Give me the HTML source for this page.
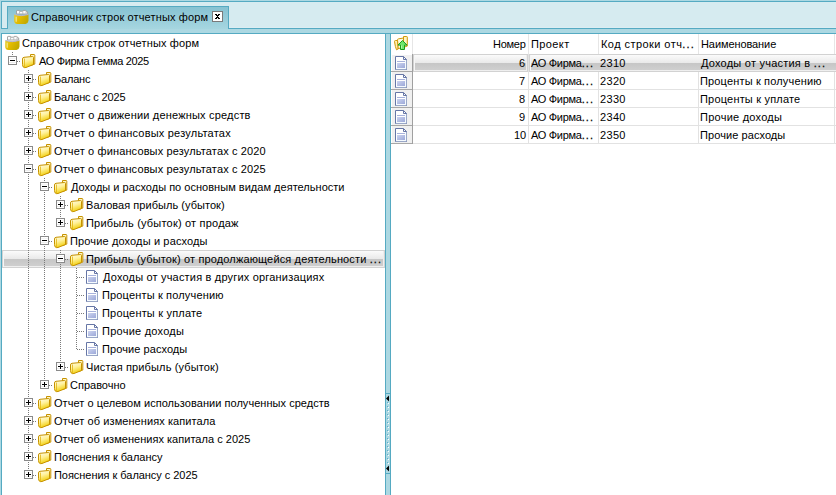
<!DOCTYPE html><html><head><meta charset="utf-8"><style>
html,body{margin:0;padding:0;width:836px;height:495px;overflow:hidden;background:#fff;}
body{position:relative;font-family:"Liberation Sans",sans-serif;font-size:11px;color:#000;}
.a{position:absolute;}
.t{position:absolute;white-space:nowrap;line-height:18px;height:18px;-webkit-text-stroke:0px #000;}
.el{letter-spacing:1.1px;-webkit-text-stroke:0.25px #000;}
svg{display:block;}
</style></head><body>
<div class="a" style="left:0;top:0;width:836px;height:34px;background:#acd8e2"></div>
<div class="a" style="left:1px;top:1px;width:835px;height:26px;background:#d6ebf0;border-top:1px solid #55aac2;border-left:1px solid #55aac2"></div>
<div class="a" style="left:2px;top:27px;width:834px;height:1px;background:#dcedf2"></div>
<div class="a" style="left:1px;top:28px;width:835px;height:1px;background:#55aac2"></div>
<div class="a" style="left:1px;top:33px;width:835px;height:1px;background:#55aac2"></div>
<div class="a" style="left:7px;top:6px;width:220px;height:22px;border:1px solid #55aac2;border-bottom:none;background:linear-gradient(#86c2d2,#a6d6e0)"></div>
<div class="a" style="left:13px;top:9px"><svg width="16" height="16" viewBox="0 0 16 16"><defs><linearGradient id="rgt" x1="0" y1="0" x2="1" y2="0.4"><stop offset="0" stop-color="#e6d03a"/><stop offset="0.45" stop-color="#e4bc00"/><stop offset="1" stop-color="#c4aa00"/></linearGradient></defs><path d="M3.5 5 v-3 q0-0.6 0.6-0.6 h2.4 l0.5 0.8 h2.6 l0.5-0.8 h2.4 l1.2 0.8 v0.8 h1 v2z" fill="#fbfbfb" stroke="#9c9c9c" stroke-width="0.9"/><path d="M6.5 1.8 v3 M9.8 2 v3 M13 2.2 v2.5" stroke="#b4b4b4" stroke-width="0.8"/><path d="M1.2 5.2 q6.5 2.6 14.3 0 v6.6 q-0.3 2.6-3 3.2 h-8.5 q-2.6-0.4-2.8-2.8z" fill="url(#rgt)"/><path d="M1.5 5.5 q6.5 2.4 13.8 0" stroke="#b4b4d8" stroke-width="1" fill="none"/><path d="M3.2 7.8 v5" stroke="#f4e68a" stroke-width="1.2"/></svg></div>
<div class="t" style="left:31.00px;top:8px;letter-spacing:0.138px">Справочник строк отчетных форм</div>
<div class="a" style="left:212px;top:11px;width:9px;height:9px;border:1px solid #7a7a7a;background:#fff"><svg width="9" height="9" shape-rendering="crispEdges" fill="#000"><rect x="2" y="2" width="1" height="1"/><rect x="3" y="2" width="1" height="1"/><rect x="5" y="2" width="1" height="1"/><rect x="6" y="2" width="1" height="1"/><rect x="3" y="3" width="1" height="1"/><rect x="4" y="3" width="1" height="1"/><rect x="5" y="3" width="1" height="1"/><rect x="4" y="4" width="1" height="1"/><rect x="3" y="5" width="1" height="1"/><rect x="4" y="5" width="1" height="1"/><rect x="5" y="5" width="1" height="1"/><rect x="2" y="6" width="1" height="1"/><rect x="3" y="6" width="1" height="1"/><rect x="5" y="6" width="1" height="1"/><rect x="6" y="6" width="1" height="1"/></svg></div>
<div class="a" style="left:1px;top:33px;width:1px;height:462px;background:#55aac2"></div>
<div class="a" style="left:0px;top:34px;width:1px;height:461px;background:#acd8e2"></div>
<div class="a" style="left:385px;top:34px;width:4px;height:461px;background:#acd8e2;border-left:1px solid #55aac2;border-right:1px solid #55aac2"></div>
<div class="a" style="left:386px;top:393px;width:4px;height:1px;background:#55aac2"></div>
<div class="a" style="left:386px;top:473px;width:4px;height:1px;background:#55aac2"></div>
<svg class="a" style="left:386px;top:395px" width="4" height="78"><path d="M0 3.5 L3 0.5 V6.5z" fill="#000"/><rect x="2" y="8" width="1" height="1" fill="#fff"/><rect x="1" y="7" width="1" height="1" fill="#5aaecb"/><rect x="2" y="12" width="1" height="1" fill="#fff"/><rect x="1" y="11" width="1" height="1" fill="#5aaecb"/><rect x="2" y="16" width="1" height="1" fill="#fff"/><rect x="1" y="15" width="1" height="1" fill="#5aaecb"/><rect x="2" y="20" width="1" height="1" fill="#fff"/><rect x="1" y="19" width="1" height="1" fill="#5aaecb"/><rect x="2" y="24" width="1" height="1" fill="#fff"/><rect x="1" y="23" width="1" height="1" fill="#5aaecb"/><rect x="2" y="28" width="1" height="1" fill="#fff"/><rect x="1" y="27" width="1" height="1" fill="#5aaecb"/><rect x="2" y="32" width="1" height="1" fill="#fff"/><rect x="1" y="31" width="1" height="1" fill="#5aaecb"/><rect x="2" y="36" width="1" height="1" fill="#fff"/><rect x="1" y="35" width="1" height="1" fill="#5aaecb"/><rect x="2" y="40" width="1" height="1" fill="#fff"/><rect x="1" y="39" width="1" height="1" fill="#5aaecb"/><rect x="2" y="44" width="1" height="1" fill="#fff"/><rect x="1" y="43" width="1" height="1" fill="#5aaecb"/><rect x="2" y="48" width="1" height="1" fill="#fff"/><rect x="1" y="47" width="1" height="1" fill="#5aaecb"/><rect x="2" y="52" width="1" height="1" fill="#fff"/><rect x="1" y="51" width="1" height="1" fill="#5aaecb"/><rect x="2" y="56" width="1" height="1" fill="#fff"/><rect x="1" y="55" width="1" height="1" fill="#5aaecb"/><rect x="2" y="60" width="1" height="1" fill="#fff"/><rect x="1" y="59" width="1" height="1" fill="#5aaecb"/><rect x="2" y="64" width="1" height="1" fill="#fff"/><rect x="1" y="63" width="1" height="1" fill="#5aaecb"/><rect x="2" y="68" width="1" height="1" fill="#fff"/><rect x="1" y="67" width="1" height="1" fill="#5aaecb"/><path d="M0 73.5 L3 70.5 V76.5z" fill="#000"/></svg>
<div class="a" style="left:2px;top:250px;width:381px;height:16px;border:1px solid #d2d2d2;background:linear-gradient(#fbfbfb 0px,#e9e9e9 8px,#c6c6c6 8px,#cfcfcf 15px,#efefef 15px);box-shadow:inset 1px 0 #f6f6f6,inset -1px 0 #eeeeee"></div>
<svg class="a" style="left:0;top:0" width="385" height="495"><rect x="12" y="52" width="1" height="1" fill="#7a7a7a"/><rect x="12" y="54" width="1" height="1" fill="#7a7a7a"/><rect x="12" y="56" width="1" height="1" fill="#7a7a7a"/><rect x="12" y="58" width="1" height="1" fill="#7a7a7a"/><rect x="12" y="60" width="1" height="1" fill="#7a7a7a"/><rect x="17" y="61" width="1" height="1" fill="#7a7a7a"/><rect x="19" y="61" width="1" height="1" fill="#7a7a7a"/><rect x="28" y="70" width="1" height="1" fill="#7a7a7a"/><rect x="28" y="72" width="1" height="1" fill="#7a7a7a"/><rect x="28" y="74" width="1" height="1" fill="#7a7a7a"/><rect x="28" y="76" width="1" height="1" fill="#7a7a7a"/><rect x="28" y="78" width="1" height="1" fill="#7a7a7a"/><rect x="28" y="80" width="1" height="1" fill="#7a7a7a"/><rect x="28" y="82" width="1" height="1" fill="#7a7a7a"/><rect x="28" y="84" width="1" height="1" fill="#7a7a7a"/><rect x="28" y="86" width="1" height="1" fill="#7a7a7a"/><rect x="33" y="79" width="1" height="1" fill="#7a7a7a"/><rect x="35" y="79" width="1" height="1" fill="#7a7a7a"/><rect x="28" y="88" width="1" height="1" fill="#7a7a7a"/><rect x="28" y="90" width="1" height="1" fill="#7a7a7a"/><rect x="28" y="92" width="1" height="1" fill="#7a7a7a"/><rect x="28" y="94" width="1" height="1" fill="#7a7a7a"/><rect x="28" y="96" width="1" height="1" fill="#7a7a7a"/><rect x="28" y="98" width="1" height="1" fill="#7a7a7a"/><rect x="28" y="100" width="1" height="1" fill="#7a7a7a"/><rect x="28" y="102" width="1" height="1" fill="#7a7a7a"/><rect x="28" y="104" width="1" height="1" fill="#7a7a7a"/><rect x="33" y="97" width="1" height="1" fill="#7a7a7a"/><rect x="35" y="97" width="1" height="1" fill="#7a7a7a"/><rect x="28" y="106" width="1" height="1" fill="#7a7a7a"/><rect x="28" y="108" width="1" height="1" fill="#7a7a7a"/><rect x="28" y="110" width="1" height="1" fill="#7a7a7a"/><rect x="28" y="112" width="1" height="1" fill="#7a7a7a"/><rect x="28" y="114" width="1" height="1" fill="#7a7a7a"/><rect x="28" y="116" width="1" height="1" fill="#7a7a7a"/><rect x="28" y="118" width="1" height="1" fill="#7a7a7a"/><rect x="28" y="120" width="1" height="1" fill="#7a7a7a"/><rect x="28" y="122" width="1" height="1" fill="#7a7a7a"/><rect x="33" y="115" width="1" height="1" fill="#7a7a7a"/><rect x="35" y="115" width="1" height="1" fill="#7a7a7a"/><rect x="28" y="124" width="1" height="1" fill="#7a7a7a"/><rect x="28" y="126" width="1" height="1" fill="#7a7a7a"/><rect x="28" y="128" width="1" height="1" fill="#7a7a7a"/><rect x="28" y="130" width="1" height="1" fill="#7a7a7a"/><rect x="28" y="132" width="1" height="1" fill="#7a7a7a"/><rect x="28" y="134" width="1" height="1" fill="#7a7a7a"/><rect x="28" y="136" width="1" height="1" fill="#7a7a7a"/><rect x="28" y="138" width="1" height="1" fill="#7a7a7a"/><rect x="28" y="140" width="1" height="1" fill="#7a7a7a"/><rect x="33" y="133" width="1" height="1" fill="#7a7a7a"/><rect x="35" y="133" width="1" height="1" fill="#7a7a7a"/><rect x="28" y="142" width="1" height="1" fill="#7a7a7a"/><rect x="28" y="144" width="1" height="1" fill="#7a7a7a"/><rect x="28" y="146" width="1" height="1" fill="#7a7a7a"/><rect x="28" y="148" width="1" height="1" fill="#7a7a7a"/><rect x="28" y="150" width="1" height="1" fill="#7a7a7a"/><rect x="28" y="152" width="1" height="1" fill="#7a7a7a"/><rect x="28" y="154" width="1" height="1" fill="#7a7a7a"/><rect x="28" y="156" width="1" height="1" fill="#7a7a7a"/><rect x="28" y="158" width="1" height="1" fill="#7a7a7a"/><rect x="33" y="151" width="1" height="1" fill="#7a7a7a"/><rect x="35" y="151" width="1" height="1" fill="#7a7a7a"/><rect x="28" y="160" width="1" height="1" fill="#7a7a7a"/><rect x="28" y="162" width="1" height="1" fill="#7a7a7a"/><rect x="28" y="164" width="1" height="1" fill="#7a7a7a"/><rect x="28" y="166" width="1" height="1" fill="#7a7a7a"/><rect x="28" y="168" width="1" height="1" fill="#7a7a7a"/><rect x="28" y="170" width="1" height="1" fill="#7a7a7a"/><rect x="28" y="172" width="1" height="1" fill="#7a7a7a"/><rect x="28" y="174" width="1" height="1" fill="#7a7a7a"/><rect x="28" y="176" width="1" height="1" fill="#7a7a7a"/><rect x="28" y="178" width="1" height="1" fill="#7a7a7a"/><rect x="28" y="180" width="1" height="1" fill="#7a7a7a"/><rect x="28" y="182" width="1" height="1" fill="#7a7a7a"/><rect x="28" y="184" width="1" height="1" fill="#7a7a7a"/><rect x="28" y="186" width="1" height="1" fill="#7a7a7a"/><rect x="28" y="188" width="1" height="1" fill="#7a7a7a"/><rect x="28" y="190" width="1" height="1" fill="#7a7a7a"/><rect x="28" y="192" width="1" height="1" fill="#7a7a7a"/><rect x="28" y="194" width="1" height="1" fill="#7a7a7a"/><rect x="28" y="196" width="1" height="1" fill="#7a7a7a"/><rect x="28" y="198" width="1" height="1" fill="#7a7a7a"/><rect x="28" y="200" width="1" height="1" fill="#7a7a7a"/><rect x="28" y="202" width="1" height="1" fill="#7a7a7a"/><rect x="28" y="204" width="1" height="1" fill="#7a7a7a"/><rect x="28" y="206" width="1" height="1" fill="#7a7a7a"/><rect x="28" y="208" width="1" height="1" fill="#7a7a7a"/><rect x="28" y="210" width="1" height="1" fill="#7a7a7a"/><rect x="28" y="212" width="1" height="1" fill="#7a7a7a"/><rect x="28" y="214" width="1" height="1" fill="#7a7a7a"/><rect x="28" y="216" width="1" height="1" fill="#7a7a7a"/><rect x="28" y="218" width="1" height="1" fill="#7a7a7a"/><rect x="28" y="220" width="1" height="1" fill="#7a7a7a"/><rect x="28" y="222" width="1" height="1" fill="#7a7a7a"/><rect x="28" y="224" width="1" height="1" fill="#7a7a7a"/><rect x="28" y="226" width="1" height="1" fill="#7a7a7a"/><rect x="28" y="228" width="1" height="1" fill="#7a7a7a"/><rect x="28" y="230" width="1" height="1" fill="#7a7a7a"/><rect x="28" y="232" width="1" height="1" fill="#7a7a7a"/><rect x="28" y="234" width="1" height="1" fill="#7a7a7a"/><rect x="28" y="236" width="1" height="1" fill="#7a7a7a"/><rect x="28" y="238" width="1" height="1" fill="#7a7a7a"/><rect x="28" y="240" width="1" height="1" fill="#7a7a7a"/><rect x="28" y="242" width="1" height="1" fill="#7a7a7a"/><rect x="28" y="244" width="1" height="1" fill="#7a7a7a"/><rect x="28" y="246" width="1" height="1" fill="#7a7a7a"/><rect x="28" y="248" width="1" height="1" fill="#7a7a7a"/><rect x="28" y="250" width="1" height="1" fill="#7a7a7a"/><rect x="28" y="252" width="1" height="1" fill="#7a7a7a"/><rect x="28" y="254" width="1" height="1" fill="#7a7a7a"/><rect x="28" y="256" width="1" height="1" fill="#7a7a7a"/><rect x="28" y="258" width="1" height="1" fill="#7a7a7a"/><rect x="28" y="260" width="1" height="1" fill="#7a7a7a"/><rect x="28" y="262" width="1" height="1" fill="#7a7a7a"/><rect x="28" y="264" width="1" height="1" fill="#7a7a7a"/><rect x="28" y="266" width="1" height="1" fill="#7a7a7a"/><rect x="28" y="268" width="1" height="1" fill="#7a7a7a"/><rect x="28" y="270" width="1" height="1" fill="#7a7a7a"/><rect x="28" y="272" width="1" height="1" fill="#7a7a7a"/><rect x="28" y="274" width="1" height="1" fill="#7a7a7a"/><rect x="28" y="276" width="1" height="1" fill="#7a7a7a"/><rect x="28" y="278" width="1" height="1" fill="#7a7a7a"/><rect x="28" y="280" width="1" height="1" fill="#7a7a7a"/><rect x="28" y="282" width="1" height="1" fill="#7a7a7a"/><rect x="28" y="284" width="1" height="1" fill="#7a7a7a"/><rect x="28" y="286" width="1" height="1" fill="#7a7a7a"/><rect x="28" y="288" width="1" height="1" fill="#7a7a7a"/><rect x="28" y="290" width="1" height="1" fill="#7a7a7a"/><rect x="28" y="292" width="1" height="1" fill="#7a7a7a"/><rect x="28" y="294" width="1" height="1" fill="#7a7a7a"/><rect x="28" y="296" width="1" height="1" fill="#7a7a7a"/><rect x="28" y="298" width="1" height="1" fill="#7a7a7a"/><rect x="28" y="300" width="1" height="1" fill="#7a7a7a"/><rect x="28" y="302" width="1" height="1" fill="#7a7a7a"/><rect x="28" y="304" width="1" height="1" fill="#7a7a7a"/><rect x="28" y="306" width="1" height="1" fill="#7a7a7a"/><rect x="28" y="308" width="1" height="1" fill="#7a7a7a"/><rect x="28" y="310" width="1" height="1" fill="#7a7a7a"/><rect x="28" y="312" width="1" height="1" fill="#7a7a7a"/><rect x="28" y="314" width="1" height="1" fill="#7a7a7a"/><rect x="28" y="316" width="1" height="1" fill="#7a7a7a"/><rect x="28" y="318" width="1" height="1" fill="#7a7a7a"/><rect x="28" y="320" width="1" height="1" fill="#7a7a7a"/><rect x="28" y="322" width="1" height="1" fill="#7a7a7a"/><rect x="28" y="324" width="1" height="1" fill="#7a7a7a"/><rect x="28" y="326" width="1" height="1" fill="#7a7a7a"/><rect x="28" y="328" width="1" height="1" fill="#7a7a7a"/><rect x="28" y="330" width="1" height="1" fill="#7a7a7a"/><rect x="28" y="332" width="1" height="1" fill="#7a7a7a"/><rect x="28" y="334" width="1" height="1" fill="#7a7a7a"/><rect x="28" y="336" width="1" height="1" fill="#7a7a7a"/><rect x="28" y="338" width="1" height="1" fill="#7a7a7a"/><rect x="28" y="340" width="1" height="1" fill="#7a7a7a"/><rect x="28" y="342" width="1" height="1" fill="#7a7a7a"/><rect x="28" y="344" width="1" height="1" fill="#7a7a7a"/><rect x="28" y="346" width="1" height="1" fill="#7a7a7a"/><rect x="28" y="348" width="1" height="1" fill="#7a7a7a"/><rect x="28" y="350" width="1" height="1" fill="#7a7a7a"/><rect x="28" y="352" width="1" height="1" fill="#7a7a7a"/><rect x="28" y="354" width="1" height="1" fill="#7a7a7a"/><rect x="28" y="356" width="1" height="1" fill="#7a7a7a"/><rect x="28" y="358" width="1" height="1" fill="#7a7a7a"/><rect x="28" y="360" width="1" height="1" fill="#7a7a7a"/><rect x="28" y="362" width="1" height="1" fill="#7a7a7a"/><rect x="28" y="364" width="1" height="1" fill="#7a7a7a"/><rect x="28" y="366" width="1" height="1" fill="#7a7a7a"/><rect x="28" y="368" width="1" height="1" fill="#7a7a7a"/><rect x="28" y="370" width="1" height="1" fill="#7a7a7a"/><rect x="28" y="372" width="1" height="1" fill="#7a7a7a"/><rect x="28" y="374" width="1" height="1" fill="#7a7a7a"/><rect x="28" y="376" width="1" height="1" fill="#7a7a7a"/><rect x="28" y="378" width="1" height="1" fill="#7a7a7a"/><rect x="28" y="380" width="1" height="1" fill="#7a7a7a"/><rect x="28" y="382" width="1" height="1" fill="#7a7a7a"/><rect x="28" y="384" width="1" height="1" fill="#7a7a7a"/><rect x="28" y="386" width="1" height="1" fill="#7a7a7a"/><rect x="28" y="388" width="1" height="1" fill="#7a7a7a"/><rect x="28" y="390" width="1" height="1" fill="#7a7a7a"/><rect x="28" y="392" width="1" height="1" fill="#7a7a7a"/><rect x="33" y="169" width="1" height="1" fill="#7a7a7a"/><rect x="35" y="169" width="1" height="1" fill="#7a7a7a"/><rect x="44" y="178" width="1" height="1" fill="#7a7a7a"/><rect x="44" y="180" width="1" height="1" fill="#7a7a7a"/><rect x="44" y="182" width="1" height="1" fill="#7a7a7a"/><rect x="44" y="184" width="1" height="1" fill="#7a7a7a"/><rect x="44" y="186" width="1" height="1" fill="#7a7a7a"/><rect x="44" y="188" width="1" height="1" fill="#7a7a7a"/><rect x="44" y="190" width="1" height="1" fill="#7a7a7a"/><rect x="44" y="192" width="1" height="1" fill="#7a7a7a"/><rect x="44" y="194" width="1" height="1" fill="#7a7a7a"/><rect x="44" y="196" width="1" height="1" fill="#7a7a7a"/><rect x="44" y="198" width="1" height="1" fill="#7a7a7a"/><rect x="44" y="200" width="1" height="1" fill="#7a7a7a"/><rect x="44" y="202" width="1" height="1" fill="#7a7a7a"/><rect x="44" y="204" width="1" height="1" fill="#7a7a7a"/><rect x="44" y="206" width="1" height="1" fill="#7a7a7a"/><rect x="44" y="208" width="1" height="1" fill="#7a7a7a"/><rect x="44" y="210" width="1" height="1" fill="#7a7a7a"/><rect x="44" y="212" width="1" height="1" fill="#7a7a7a"/><rect x="44" y="214" width="1" height="1" fill="#7a7a7a"/><rect x="44" y="216" width="1" height="1" fill="#7a7a7a"/><rect x="44" y="218" width="1" height="1" fill="#7a7a7a"/><rect x="44" y="220" width="1" height="1" fill="#7a7a7a"/><rect x="44" y="222" width="1" height="1" fill="#7a7a7a"/><rect x="44" y="224" width="1" height="1" fill="#7a7a7a"/><rect x="44" y="226" width="1" height="1" fill="#7a7a7a"/><rect x="44" y="228" width="1" height="1" fill="#7a7a7a"/><rect x="44" y="230" width="1" height="1" fill="#7a7a7a"/><rect x="49" y="187" width="1" height="1" fill="#7a7a7a"/><rect x="51" y="187" width="1" height="1" fill="#7a7a7a"/><rect x="60" y="196" width="1" height="1" fill="#7a7a7a"/><rect x="60" y="198" width="1" height="1" fill="#7a7a7a"/><rect x="60" y="200" width="1" height="1" fill="#7a7a7a"/><rect x="60" y="202" width="1" height="1" fill="#7a7a7a"/><rect x="60" y="204" width="1" height="1" fill="#7a7a7a"/><rect x="60" y="206" width="1" height="1" fill="#7a7a7a"/><rect x="60" y="208" width="1" height="1" fill="#7a7a7a"/><rect x="60" y="210" width="1" height="1" fill="#7a7a7a"/><rect x="60" y="212" width="1" height="1" fill="#7a7a7a"/><rect x="65" y="205" width="1" height="1" fill="#7a7a7a"/><rect x="67" y="205" width="1" height="1" fill="#7a7a7a"/><rect x="60" y="214" width="1" height="1" fill="#7a7a7a"/><rect x="60" y="216" width="1" height="1" fill="#7a7a7a"/><rect x="60" y="218" width="1" height="1" fill="#7a7a7a"/><rect x="60" y="220" width="1" height="1" fill="#7a7a7a"/><rect x="60" y="222" width="1" height="1" fill="#7a7a7a"/><rect x="65" y="223" width="1" height="1" fill="#7a7a7a"/><rect x="67" y="223" width="1" height="1" fill="#7a7a7a"/><rect x="44" y="232" width="1" height="1" fill="#7a7a7a"/><rect x="44" y="234" width="1" height="1" fill="#7a7a7a"/><rect x="44" y="236" width="1" height="1" fill="#7a7a7a"/><rect x="44" y="238" width="1" height="1" fill="#7a7a7a"/><rect x="44" y="240" width="1" height="1" fill="#7a7a7a"/><rect x="44" y="242" width="1" height="1" fill="#7a7a7a"/><rect x="44" y="244" width="1" height="1" fill="#7a7a7a"/><rect x="44" y="246" width="1" height="1" fill="#7a7a7a"/><rect x="44" y="248" width="1" height="1" fill="#7a7a7a"/><rect x="44" y="250" width="1" height="1" fill="#7a7a7a"/><rect x="44" y="252" width="1" height="1" fill="#7a7a7a"/><rect x="44" y="254" width="1" height="1" fill="#7a7a7a"/><rect x="44" y="256" width="1" height="1" fill="#7a7a7a"/><rect x="44" y="258" width="1" height="1" fill="#7a7a7a"/><rect x="44" y="260" width="1" height="1" fill="#7a7a7a"/><rect x="44" y="262" width="1" height="1" fill="#7a7a7a"/><rect x="44" y="264" width="1" height="1" fill="#7a7a7a"/><rect x="44" y="266" width="1" height="1" fill="#7a7a7a"/><rect x="44" y="268" width="1" height="1" fill="#7a7a7a"/><rect x="44" y="270" width="1" height="1" fill="#7a7a7a"/><rect x="44" y="272" width="1" height="1" fill="#7a7a7a"/><rect x="44" y="274" width="1" height="1" fill="#7a7a7a"/><rect x="44" y="276" width="1" height="1" fill="#7a7a7a"/><rect x="44" y="278" width="1" height="1" fill="#7a7a7a"/><rect x="44" y="280" width="1" height="1" fill="#7a7a7a"/><rect x="44" y="282" width="1" height="1" fill="#7a7a7a"/><rect x="44" y="284" width="1" height="1" fill="#7a7a7a"/><rect x="44" y="286" width="1" height="1" fill="#7a7a7a"/><rect x="44" y="288" width="1" height="1" fill="#7a7a7a"/><rect x="44" y="290" width="1" height="1" fill="#7a7a7a"/><rect x="44" y="292" width="1" height="1" fill="#7a7a7a"/><rect x="44" y="294" width="1" height="1" fill="#7a7a7a"/><rect x="44" y="296" width="1" height="1" fill="#7a7a7a"/><rect x="44" y="298" width="1" height="1" fill="#7a7a7a"/><rect x="44" y="300" width="1" height="1" fill="#7a7a7a"/><rect x="44" y="302" width="1" height="1" fill="#7a7a7a"/><rect x="44" y="304" width="1" height="1" fill="#7a7a7a"/><rect x="44" y="306" width="1" height="1" fill="#7a7a7a"/><rect x="44" y="308" width="1" height="1" fill="#7a7a7a"/><rect x="44" y="310" width="1" height="1" fill="#7a7a7a"/><rect x="44" y="312" width="1" height="1" fill="#7a7a7a"/><rect x="44" y="314" width="1" height="1" fill="#7a7a7a"/><rect x="44" y="316" width="1" height="1" fill="#7a7a7a"/><rect x="44" y="318" width="1" height="1" fill="#7a7a7a"/><rect x="44" y="320" width="1" height="1" fill="#7a7a7a"/><rect x="44" y="322" width="1" height="1" fill="#7a7a7a"/><rect x="44" y="324" width="1" height="1" fill="#7a7a7a"/><rect x="44" y="326" width="1" height="1" fill="#7a7a7a"/><rect x="44" y="328" width="1" height="1" fill="#7a7a7a"/><rect x="44" y="330" width="1" height="1" fill="#7a7a7a"/><rect x="44" y="332" width="1" height="1" fill="#7a7a7a"/><rect x="44" y="334" width="1" height="1" fill="#7a7a7a"/><rect x="44" y="336" width="1" height="1" fill="#7a7a7a"/><rect x="44" y="338" width="1" height="1" fill="#7a7a7a"/><rect x="44" y="340" width="1" height="1" fill="#7a7a7a"/><rect x="44" y="342" width="1" height="1" fill="#7a7a7a"/><rect x="44" y="344" width="1" height="1" fill="#7a7a7a"/><rect x="44" y="346" width="1" height="1" fill="#7a7a7a"/><rect x="44" y="348" width="1" height="1" fill="#7a7a7a"/><rect x="44" y="350" width="1" height="1" fill="#7a7a7a"/><rect x="44" y="352" width="1" height="1" fill="#7a7a7a"/><rect x="44" y="354" width="1" height="1" fill="#7a7a7a"/><rect x="44" y="356" width="1" height="1" fill="#7a7a7a"/><rect x="44" y="358" width="1" height="1" fill="#7a7a7a"/><rect x="44" y="360" width="1" height="1" fill="#7a7a7a"/><rect x="44" y="362" width="1" height="1" fill="#7a7a7a"/><rect x="44" y="364" width="1" height="1" fill="#7a7a7a"/><rect x="44" y="366" width="1" height="1" fill="#7a7a7a"/><rect x="44" y="368" width="1" height="1" fill="#7a7a7a"/><rect x="44" y="370" width="1" height="1" fill="#7a7a7a"/><rect x="44" y="372" width="1" height="1" fill="#7a7a7a"/><rect x="44" y="374" width="1" height="1" fill="#7a7a7a"/><rect x="49" y="241" width="1" height="1" fill="#7a7a7a"/><rect x="51" y="241" width="1" height="1" fill="#7a7a7a"/><rect x="60" y="250" width="1" height="1" fill="#7a7a7a"/><rect x="60" y="252" width="1" height="1" fill="#7a7a7a"/><rect x="60" y="254" width="1" height="1" fill="#7a7a7a"/><rect x="60" y="256" width="1" height="1" fill="#7a7a7a"/><rect x="60" y="258" width="1" height="1" fill="#7a7a7a"/><rect x="60" y="260" width="1" height="1" fill="#7a7a7a"/><rect x="60" y="262" width="1" height="1" fill="#7a7a7a"/><rect x="60" y="264" width="1" height="1" fill="#7a7a7a"/><rect x="60" y="266" width="1" height="1" fill="#7a7a7a"/><rect x="60" y="268" width="1" height="1" fill="#7a7a7a"/><rect x="60" y="270" width="1" height="1" fill="#7a7a7a"/><rect x="60" y="272" width="1" height="1" fill="#7a7a7a"/><rect x="60" y="274" width="1" height="1" fill="#7a7a7a"/><rect x="60" y="276" width="1" height="1" fill="#7a7a7a"/><rect x="60" y="278" width="1" height="1" fill="#7a7a7a"/><rect x="60" y="280" width="1" height="1" fill="#7a7a7a"/><rect x="60" y="282" width="1" height="1" fill="#7a7a7a"/><rect x="60" y="284" width="1" height="1" fill="#7a7a7a"/><rect x="60" y="286" width="1" height="1" fill="#7a7a7a"/><rect x="60" y="288" width="1" height="1" fill="#7a7a7a"/><rect x="60" y="290" width="1" height="1" fill="#7a7a7a"/><rect x="60" y="292" width="1" height="1" fill="#7a7a7a"/><rect x="60" y="294" width="1" height="1" fill="#7a7a7a"/><rect x="60" y="296" width="1" height="1" fill="#7a7a7a"/><rect x="60" y="298" width="1" height="1" fill="#7a7a7a"/><rect x="60" y="300" width="1" height="1" fill="#7a7a7a"/><rect x="60" y="302" width="1" height="1" fill="#7a7a7a"/><rect x="60" y="304" width="1" height="1" fill="#7a7a7a"/><rect x="60" y="306" width="1" height="1" fill="#7a7a7a"/><rect x="60" y="308" width="1" height="1" fill="#7a7a7a"/><rect x="60" y="310" width="1" height="1" fill="#7a7a7a"/><rect x="60" y="312" width="1" height="1" fill="#7a7a7a"/><rect x="60" y="314" width="1" height="1" fill="#7a7a7a"/><rect x="60" y="316" width="1" height="1" fill="#7a7a7a"/><rect x="60" y="318" width="1" height="1" fill="#7a7a7a"/><rect x="60" y="320" width="1" height="1" fill="#7a7a7a"/><rect x="60" y="322" width="1" height="1" fill="#7a7a7a"/><rect x="60" y="324" width="1" height="1" fill="#7a7a7a"/><rect x="60" y="326" width="1" height="1" fill="#7a7a7a"/><rect x="60" y="328" width="1" height="1" fill="#7a7a7a"/><rect x="60" y="330" width="1" height="1" fill="#7a7a7a"/><rect x="60" y="332" width="1" height="1" fill="#7a7a7a"/><rect x="60" y="334" width="1" height="1" fill="#7a7a7a"/><rect x="60" y="336" width="1" height="1" fill="#7a7a7a"/><rect x="60" y="338" width="1" height="1" fill="#7a7a7a"/><rect x="60" y="340" width="1" height="1" fill="#7a7a7a"/><rect x="60" y="342" width="1" height="1" fill="#7a7a7a"/><rect x="60" y="344" width="1" height="1" fill="#7a7a7a"/><rect x="60" y="346" width="1" height="1" fill="#7a7a7a"/><rect x="60" y="348" width="1" height="1" fill="#7a7a7a"/><rect x="60" y="350" width="1" height="1" fill="#7a7a7a"/><rect x="60" y="352" width="1" height="1" fill="#7a7a7a"/><rect x="60" y="354" width="1" height="1" fill="#7a7a7a"/><rect x="60" y="356" width="1" height="1" fill="#7a7a7a"/><rect x="65" y="259" width="1" height="1" fill="#7a7a7a"/><rect x="67" y="259" width="1" height="1" fill="#7a7a7a"/><rect x="76" y="268" width="1" height="1" fill="#7a7a7a"/><rect x="76" y="270" width="1" height="1" fill="#7a7a7a"/><rect x="76" y="272" width="1" height="1" fill="#7a7a7a"/><rect x="76" y="274" width="1" height="1" fill="#7a7a7a"/><rect x="76" y="276" width="1" height="1" fill="#7a7a7a"/><rect x="76" y="278" width="1" height="1" fill="#7a7a7a"/><rect x="76" y="280" width="1" height="1" fill="#7a7a7a"/><rect x="76" y="282" width="1" height="1" fill="#7a7a7a"/><rect x="76" y="284" width="1" height="1" fill="#7a7a7a"/><rect x="77" y="277" width="1" height="1" fill="#7a7a7a"/><rect x="79" y="277" width="1" height="1" fill="#7a7a7a"/><rect x="81" y="277" width="1" height="1" fill="#7a7a7a"/><rect x="83" y="277" width="1" height="1" fill="#7a7a7a"/><rect x="76" y="286" width="1" height="1" fill="#7a7a7a"/><rect x="76" y="288" width="1" height="1" fill="#7a7a7a"/><rect x="76" y="290" width="1" height="1" fill="#7a7a7a"/><rect x="76" y="292" width="1" height="1" fill="#7a7a7a"/><rect x="76" y="294" width="1" height="1" fill="#7a7a7a"/><rect x="76" y="296" width="1" height="1" fill="#7a7a7a"/><rect x="76" y="298" width="1" height="1" fill="#7a7a7a"/><rect x="76" y="300" width="1" height="1" fill="#7a7a7a"/><rect x="76" y="302" width="1" height="1" fill="#7a7a7a"/><rect x="77" y="295" width="1" height="1" fill="#7a7a7a"/><rect x="79" y="295" width="1" height="1" fill="#7a7a7a"/><rect x="81" y="295" width="1" height="1" fill="#7a7a7a"/><rect x="83" y="295" width="1" height="1" fill="#7a7a7a"/><rect x="76" y="304" width="1" height="1" fill="#7a7a7a"/><rect x="76" y="306" width="1" height="1" fill="#7a7a7a"/><rect x="76" y="308" width="1" height="1" fill="#7a7a7a"/><rect x="76" y="310" width="1" height="1" fill="#7a7a7a"/><rect x="76" y="312" width="1" height="1" fill="#7a7a7a"/><rect x="76" y="314" width="1" height="1" fill="#7a7a7a"/><rect x="76" y="316" width="1" height="1" fill="#7a7a7a"/><rect x="76" y="318" width="1" height="1" fill="#7a7a7a"/><rect x="76" y="320" width="1" height="1" fill="#7a7a7a"/><rect x="77" y="313" width="1" height="1" fill="#7a7a7a"/><rect x="79" y="313" width="1" height="1" fill="#7a7a7a"/><rect x="81" y="313" width="1" height="1" fill="#7a7a7a"/><rect x="83" y="313" width="1" height="1" fill="#7a7a7a"/><rect x="76" y="322" width="1" height="1" fill="#7a7a7a"/><rect x="76" y="324" width="1" height="1" fill="#7a7a7a"/><rect x="76" y="326" width="1" height="1" fill="#7a7a7a"/><rect x="76" y="328" width="1" height="1" fill="#7a7a7a"/><rect x="76" y="330" width="1" height="1" fill="#7a7a7a"/><rect x="76" y="332" width="1" height="1" fill="#7a7a7a"/><rect x="76" y="334" width="1" height="1" fill="#7a7a7a"/><rect x="76" y="336" width="1" height="1" fill="#7a7a7a"/><rect x="76" y="338" width="1" height="1" fill="#7a7a7a"/><rect x="77" y="331" width="1" height="1" fill="#7a7a7a"/><rect x="79" y="331" width="1" height="1" fill="#7a7a7a"/><rect x="81" y="331" width="1" height="1" fill="#7a7a7a"/><rect x="83" y="331" width="1" height="1" fill="#7a7a7a"/><rect x="76" y="340" width="1" height="1" fill="#7a7a7a"/><rect x="76" y="342" width="1" height="1" fill="#7a7a7a"/><rect x="76" y="344" width="1" height="1" fill="#7a7a7a"/><rect x="76" y="346" width="1" height="1" fill="#7a7a7a"/><rect x="76" y="348" width="1" height="1" fill="#7a7a7a"/><rect x="77" y="349" width="1" height="1" fill="#7a7a7a"/><rect x="79" y="349" width="1" height="1" fill="#7a7a7a"/><rect x="81" y="349" width="1" height="1" fill="#7a7a7a"/><rect x="83" y="349" width="1" height="1" fill="#7a7a7a"/><rect x="60" y="358" width="1" height="1" fill="#7a7a7a"/><rect x="60" y="360" width="1" height="1" fill="#7a7a7a"/><rect x="60" y="362" width="1" height="1" fill="#7a7a7a"/><rect x="60" y="364" width="1" height="1" fill="#7a7a7a"/><rect x="60" y="366" width="1" height="1" fill="#7a7a7a"/><rect x="65" y="367" width="1" height="1" fill="#7a7a7a"/><rect x="67" y="367" width="1" height="1" fill="#7a7a7a"/><rect x="44" y="376" width="1" height="1" fill="#7a7a7a"/><rect x="44" y="378" width="1" height="1" fill="#7a7a7a"/><rect x="44" y="380" width="1" height="1" fill="#7a7a7a"/><rect x="44" y="382" width="1" height="1" fill="#7a7a7a"/><rect x="44" y="384" width="1" height="1" fill="#7a7a7a"/><rect x="49" y="385" width="1" height="1" fill="#7a7a7a"/><rect x="51" y="385" width="1" height="1" fill="#7a7a7a"/><rect x="28" y="394" width="1" height="1" fill="#7a7a7a"/><rect x="28" y="396" width="1" height="1" fill="#7a7a7a"/><rect x="28" y="398" width="1" height="1" fill="#7a7a7a"/><rect x="28" y="400" width="1" height="1" fill="#7a7a7a"/><rect x="28" y="402" width="1" height="1" fill="#7a7a7a"/><rect x="28" y="404" width="1" height="1" fill="#7a7a7a"/><rect x="28" y="406" width="1" height="1" fill="#7a7a7a"/><rect x="28" y="408" width="1" height="1" fill="#7a7a7a"/><rect x="28" y="410" width="1" height="1" fill="#7a7a7a"/><rect x="33" y="403" width="1" height="1" fill="#7a7a7a"/><rect x="35" y="403" width="1" height="1" fill="#7a7a7a"/><rect x="28" y="412" width="1" height="1" fill="#7a7a7a"/><rect x="28" y="414" width="1" height="1" fill="#7a7a7a"/><rect x="28" y="416" width="1" height="1" fill="#7a7a7a"/><rect x="28" y="418" width="1" height="1" fill="#7a7a7a"/><rect x="28" y="420" width="1" height="1" fill="#7a7a7a"/><rect x="28" y="422" width="1" height="1" fill="#7a7a7a"/><rect x="28" y="424" width="1" height="1" fill="#7a7a7a"/><rect x="28" y="426" width="1" height="1" fill="#7a7a7a"/><rect x="28" y="428" width="1" height="1" fill="#7a7a7a"/><rect x="33" y="421" width="1" height="1" fill="#7a7a7a"/><rect x="35" y="421" width="1" height="1" fill="#7a7a7a"/><rect x="28" y="430" width="1" height="1" fill="#7a7a7a"/><rect x="28" y="432" width="1" height="1" fill="#7a7a7a"/><rect x="28" y="434" width="1" height="1" fill="#7a7a7a"/><rect x="28" y="436" width="1" height="1" fill="#7a7a7a"/><rect x="28" y="438" width="1" height="1" fill="#7a7a7a"/><rect x="28" y="440" width="1" height="1" fill="#7a7a7a"/><rect x="28" y="442" width="1" height="1" fill="#7a7a7a"/><rect x="28" y="444" width="1" height="1" fill="#7a7a7a"/><rect x="28" y="446" width="1" height="1" fill="#7a7a7a"/><rect x="33" y="439" width="1" height="1" fill="#7a7a7a"/><rect x="35" y="439" width="1" height="1" fill="#7a7a7a"/><rect x="28" y="448" width="1" height="1" fill="#7a7a7a"/><rect x="28" y="450" width="1" height="1" fill="#7a7a7a"/><rect x="28" y="452" width="1" height="1" fill="#7a7a7a"/><rect x="28" y="454" width="1" height="1" fill="#7a7a7a"/><rect x="28" y="456" width="1" height="1" fill="#7a7a7a"/><rect x="28" y="458" width="1" height="1" fill="#7a7a7a"/><rect x="28" y="460" width="1" height="1" fill="#7a7a7a"/><rect x="28" y="462" width="1" height="1" fill="#7a7a7a"/><rect x="28" y="464" width="1" height="1" fill="#7a7a7a"/><rect x="33" y="457" width="1" height="1" fill="#7a7a7a"/><rect x="35" y="457" width="1" height="1" fill="#7a7a7a"/><rect x="28" y="466" width="1" height="1" fill="#7a7a7a"/><rect x="28" y="468" width="1" height="1" fill="#7a7a7a"/><rect x="28" y="470" width="1" height="1" fill="#7a7a7a"/><rect x="28" y="472" width="1" height="1" fill="#7a7a7a"/><rect x="28" y="474" width="1" height="1" fill="#7a7a7a"/><rect x="33" y="475" width="1" height="1" fill="#7a7a7a"/><rect x="35" y="475" width="1" height="1" fill="#7a7a7a"/></svg>
<div class="a" style="left:4px;top:35px"><svg width="16" height="16" viewBox="0 0 16 16"><defs><linearGradient id="rg0" x1="0" y1="0" x2="1" y2="0.4"><stop offset="0" stop-color="#e6d03a"/><stop offset="0.45" stop-color="#e4bc00"/><stop offset="1" stop-color="#c4aa00"/></linearGradient></defs><path d="M3.5 5 v-3 q0-0.6 0.6-0.6 h2.4 l0.5 0.8 h2.6 l0.5-0.8 h2.4 l1.2 0.8 v0.8 h1 v2z" fill="#fbfbfb" stroke="#9c9c9c" stroke-width="0.9"/><path d="M6.5 1.8 v3 M9.8 2 v3 M13 2.2 v2.5" stroke="#b4b4b4" stroke-width="0.8"/><path d="M1.2 5.2 q6.5 2.6 14.3 0 v6.6 q-0.3 2.6-3 3.2 h-8.5 q-2.6-0.4-2.8-2.8z" fill="url(#rg0)"/><path d="M1.5 5.5 q6.5 2.4 13.8 0" stroke="#b4b4d8" stroke-width="1" fill="none"/><path d="M3.2 7.8 v5" stroke="#f4e68a" stroke-width="1.2"/></svg></div>
<div class="t" style="left:22.00px;top:34px;letter-spacing:0.138px">Справочник строк отчетных форм</div>
<div class="a" style="left:8px;top:56px"><svg width="9" height="9"><rect x="0.5" y="0.5" width="8" height="8" fill="#fff" stroke="#8a8a8a"/><rect x="1" y="2" width="7" height="1" fill="#f4f4f4"/><rect x="1" y="6" width="7" height="1" fill="#ececec"/><rect x="2" y="4" width="5" height="1" fill="#000"/></svg></div>
<div class="a" style="left:21px;top:53px"><svg width="16" height="16" viewBox="0 0 16 16"><defs><linearGradient id="fg1" x1="0" y1="0" x2="0.35" y2="1"><stop offset="0" stop-color="#fffef2"/><stop offset="0.5" stop-color="#fff19a"/><stop offset="1" stop-color="#f2d010"/></linearGradient></defs><path d="M9.5 1.5 h3.5 q0.8 0 0.8 0.8 v8.8 l-4.3 1.4z" fill="#fff6c4" stroke="#c69200"/><path d="M1.5 6 q0-1.5 1.5-1.7 l8.5-0.8 q1 0 1 1 v7 l-7.5 3 q-2 0.5-2.8-0.6 q-0.7-0.9-0.7-2.4z" fill="url(#fg1)" stroke="#c69200"/><path d="M3.5 5.5 v8.5" stroke="#e2b410" stroke-width="0.8"/></svg></div>
<div class="t" style="left:39.00px;top:52px;letter-spacing:-0.333px">АО Фирма Гемма 2025</div>
<div class="a" style="left:24px;top:74px"><svg width="9" height="9"><rect x="0.5" y="0.5" width="8" height="8" fill="#fff" stroke="#8a8a8a"/><rect x="1" y="2" width="7" height="1" fill="#f4f4f4"/><rect x="1" y="6" width="7" height="1" fill="#ececec"/><rect x="2" y="4" width="5" height="1" fill="#000"/><rect x="4" y="2" width="1" height="5" fill="#000"/></svg></div>
<div class="a" style="left:37px;top:71px"><svg width="16" height="16" viewBox="0 0 16 16"><defs><linearGradient id="fg2" x1="0" y1="0" x2="0.35" y2="1"><stop offset="0" stop-color="#fffef2"/><stop offset="0.5" stop-color="#fff19a"/><stop offset="1" stop-color="#f2d010"/></linearGradient></defs><path d="M9.5 1.5 h3.5 q0.8 0 0.8 0.8 v8.8 l-4.3 1.4z" fill="#fff6c4" stroke="#c69200"/><path d="M1.5 6 q0-1.5 1.5-1.7 l8.5-0.8 q1 0 1 1 v7 l-7.5 3 q-2 0.5-2.8-0.6 q-0.7-0.9-0.7-2.4z" fill="url(#fg2)" stroke="#c69200"/><path d="M3.5 5.5 v8.5" stroke="#e2b410" stroke-width="0.8"/></svg></div>
<div class="t" style="left:54.00px;top:70px;letter-spacing:-0.200px">Баланс</div>
<div class="a" style="left:24px;top:92px"><svg width="9" height="9"><rect x="0.5" y="0.5" width="8" height="8" fill="#fff" stroke="#8a8a8a"/><rect x="1" y="2" width="7" height="1" fill="#f4f4f4"/><rect x="1" y="6" width="7" height="1" fill="#ececec"/><rect x="2" y="4" width="5" height="1" fill="#000"/><rect x="4" y="2" width="1" height="5" fill="#000"/></svg></div>
<div class="a" style="left:37px;top:89px"><svg width="16" height="16" viewBox="0 0 16 16"><defs><linearGradient id="fg3" x1="0" y1="0" x2="0.35" y2="1"><stop offset="0" stop-color="#fffef2"/><stop offset="0.5" stop-color="#fff19a"/><stop offset="1" stop-color="#f2d010"/></linearGradient></defs><path d="M9.5 1.5 h3.5 q0.8 0 0.8 0.8 v8.8 l-4.3 1.4z" fill="#fff6c4" stroke="#c69200"/><path d="M1.5 6 q0-1.5 1.5-1.7 l8.5-0.8 q1 0 1 1 v7 l-7.5 3 q-2 0.5-2.8-0.6 q-0.7-0.9-0.7-2.4z" fill="url(#fg3)" stroke="#c69200"/><path d="M3.5 5.5 v8.5" stroke="#e2b410" stroke-width="0.8"/></svg></div>
<div class="t" style="left:54.00px;top:88px;letter-spacing:-0.167px">Баланс с 2025</div>
<div class="a" style="left:24px;top:110px"><svg width="9" height="9"><rect x="0.5" y="0.5" width="8" height="8" fill="#fff" stroke="#8a8a8a"/><rect x="1" y="2" width="7" height="1" fill="#f4f4f4"/><rect x="1" y="6" width="7" height="1" fill="#ececec"/><rect x="2" y="4" width="5" height="1" fill="#000"/><rect x="4" y="2" width="1" height="5" fill="#000"/></svg></div>
<div class="a" style="left:37px;top:107px"><svg width="16" height="16" viewBox="0 0 16 16"><defs><linearGradient id="fg4" x1="0" y1="0" x2="0.35" y2="1"><stop offset="0" stop-color="#fffef2"/><stop offset="0.5" stop-color="#fff19a"/><stop offset="1" stop-color="#f2d010"/></linearGradient></defs><path d="M9.5 1.5 h3.5 q0.8 0 0.8 0.8 v8.8 l-4.3 1.4z" fill="#fff6c4" stroke="#c69200"/><path d="M1.5 6 q0-1.5 1.5-1.7 l8.5-0.8 q1 0 1 1 v7 l-7.5 3 q-2 0.5-2.8-0.6 q-0.7-0.9-0.7-2.4z" fill="url(#fg4)" stroke="#c69200"/><path d="M3.5 5.5 v8.5" stroke="#e2b410" stroke-width="0.8"/></svg></div>
<div class="t" style="left:54.00px;top:106px;letter-spacing:0.188px">Отчет о движении денежных средств</div>
<div class="a" style="left:24px;top:128px"><svg width="9" height="9"><rect x="0.5" y="0.5" width="8" height="8" fill="#fff" stroke="#8a8a8a"/><rect x="1" y="2" width="7" height="1" fill="#f4f4f4"/><rect x="1" y="6" width="7" height="1" fill="#ececec"/><rect x="2" y="4" width="5" height="1" fill="#000"/><rect x="4" y="2" width="1" height="5" fill="#000"/></svg></div>
<div class="a" style="left:37px;top:125px"><svg width="16" height="16" viewBox="0 0 16 16"><defs><linearGradient id="fg5" x1="0" y1="0" x2="0.35" y2="1"><stop offset="0" stop-color="#fffef2"/><stop offset="0.5" stop-color="#fff19a"/><stop offset="1" stop-color="#f2d010"/></linearGradient></defs><path d="M9.5 1.5 h3.5 q0.8 0 0.8 0.8 v8.8 l-4.3 1.4z" fill="#fff6c4" stroke="#c69200"/><path d="M1.5 6 q0-1.5 1.5-1.7 l8.5-0.8 q1 0 1 1 v7 l-7.5 3 q-2 0.5-2.8-0.6 q-0.7-0.9-0.7-2.4z" fill="url(#fg5)" stroke="#c69200"/><path d="M3.5 5.5 v8.5" stroke="#e2b410" stroke-width="0.8"/></svg></div>
<div class="t" style="left:54.00px;top:124px;letter-spacing:0.207px">Отчет о финансовых результатах</div>
<div class="a" style="left:24px;top:146px"><svg width="9" height="9"><rect x="0.5" y="0.5" width="8" height="8" fill="#fff" stroke="#8a8a8a"/><rect x="1" y="2" width="7" height="1" fill="#f4f4f4"/><rect x="1" y="6" width="7" height="1" fill="#ececec"/><rect x="2" y="4" width="5" height="1" fill="#000"/><rect x="4" y="2" width="1" height="5" fill="#000"/></svg></div>
<div class="a" style="left:37px;top:143px"><svg width="16" height="16" viewBox="0 0 16 16"><defs><linearGradient id="fg6" x1="0" y1="0" x2="0.35" y2="1"><stop offset="0" stop-color="#fffef2"/><stop offset="0.5" stop-color="#fff19a"/><stop offset="1" stop-color="#f2d010"/></linearGradient></defs><path d="M9.5 1.5 h3.5 q0.8 0 0.8 0.8 v8.8 l-4.3 1.4z" fill="#fff6c4" stroke="#c69200"/><path d="M1.5 6 q0-1.5 1.5-1.7 l8.5-0.8 q1 0 1 1 v7 l-7.5 3 q-2 0.5-2.8-0.6 q-0.7-0.9-0.7-2.4z" fill="url(#fg6)" stroke="#c69200"/><path d="M3.5 5.5 v8.5" stroke="#e2b410" stroke-width="0.8"/></svg></div>
<div class="t" style="left:54.00px;top:142px;letter-spacing:0.139px">Отчет о финансовых результатах с 2020</div>
<div class="a" style="left:24px;top:164px"><svg width="9" height="9"><rect x="0.5" y="0.5" width="8" height="8" fill="#fff" stroke="#8a8a8a"/><rect x="1" y="2" width="7" height="1" fill="#f4f4f4"/><rect x="1" y="6" width="7" height="1" fill="#ececec"/><rect x="2" y="4" width="5" height="1" fill="#000"/></svg></div>
<div class="a" style="left:37px;top:161px"><svg width="16" height="16" viewBox="0 0 16 16"><defs><linearGradient id="fg7" x1="0" y1="0" x2="0.35" y2="1"><stop offset="0" stop-color="#fffef2"/><stop offset="0.5" stop-color="#fff19a"/><stop offset="1" stop-color="#f2d010"/></linearGradient></defs><path d="M9.5 1.5 h3.5 q0.8 0 0.8 0.8 v8.8 l-4.3 1.4z" fill="#fff6c4" stroke="#c69200"/><path d="M1.5 6 q0-1.5 1.5-1.7 l8.5-0.8 q1 0 1 1 v7 l-7.5 3 q-2 0.5-2.8-0.6 q-0.7-0.9-0.7-2.4z" fill="url(#fg7)" stroke="#c69200"/><path d="M3.5 5.5 v8.5" stroke="#e2b410" stroke-width="0.8"/></svg></div>
<div class="t" style="left:54.00px;top:160px;letter-spacing:0.139px">Отчет о финансовых результатах с 2025</div>
<div class="a" style="left:40px;top:182px"><svg width="9" height="9"><rect x="0.5" y="0.5" width="8" height="8" fill="#fff" stroke="#8a8a8a"/><rect x="1" y="2" width="7" height="1" fill="#f4f4f4"/><rect x="1" y="6" width="7" height="1" fill="#ececec"/><rect x="2" y="4" width="5" height="1" fill="#000"/></svg></div>
<div class="a" style="left:53px;top:179px"><svg width="16" height="16" viewBox="0 0 16 16"><defs><linearGradient id="fg8" x1="0" y1="0" x2="0.35" y2="1"><stop offset="0" stop-color="#fffef2"/><stop offset="0.5" stop-color="#fff19a"/><stop offset="1" stop-color="#f2d010"/></linearGradient></defs><path d="M9.5 1.5 h3.5 q0.8 0 0.8 0.8 v8.8 l-4.3 1.4z" fill="#fff6c4" stroke="#c69200"/><path d="M1.5 6 q0-1.5 1.5-1.7 l8.5-0.8 q1 0 1 1 v7 l-7.5 3 q-2 0.5-2.8-0.6 q-0.7-0.9-0.7-2.4z" fill="url(#fg8)" stroke="#c69200"/><path d="M3.5 5.5 v8.5" stroke="#e2b410" stroke-width="0.8"/></svg></div>
<div class="t" style="left:71.00px;top:178px;letter-spacing:0.022px">Доходы и расходы по основным видам деятельности</div>
<div class="a" style="left:56px;top:200px"><svg width="9" height="9"><rect x="0.5" y="0.5" width="8" height="8" fill="#fff" stroke="#8a8a8a"/><rect x="1" y="2" width="7" height="1" fill="#f4f4f4"/><rect x="1" y="6" width="7" height="1" fill="#ececec"/><rect x="2" y="4" width="5" height="1" fill="#000"/><rect x="4" y="2" width="1" height="5" fill="#000"/></svg></div>
<div class="a" style="left:69px;top:197px"><svg width="16" height="16" viewBox="0 0 16 16"><defs><linearGradient id="fg9" x1="0" y1="0" x2="0.35" y2="1"><stop offset="0" stop-color="#fffef2"/><stop offset="0.5" stop-color="#fff19a"/><stop offset="1" stop-color="#f2d010"/></linearGradient></defs><path d="M9.5 1.5 h3.5 q0.8 0 0.8 0.8 v8.8 l-4.3 1.4z" fill="#fff6c4" stroke="#c69200"/><path d="M1.5 6 q0-1.5 1.5-1.7 l8.5-0.8 q1 0 1 1 v7 l-7.5 3 q-2 0.5-2.8-0.6 q-0.7-0.9-0.7-2.4z" fill="url(#fg9)" stroke="#c69200"/><path d="M3.5 5.5 v8.5" stroke="#e2b410" stroke-width="0.8"/></svg></div>
<div class="t" style="left:86.00px;top:196px;letter-spacing:0.043px">Валовая прибыль (убыток)</div>
<div class="a" style="left:56px;top:218px"><svg width="9" height="9"><rect x="0.5" y="0.5" width="8" height="8" fill="#fff" stroke="#8a8a8a"/><rect x="1" y="2" width="7" height="1" fill="#f4f4f4"/><rect x="1" y="6" width="7" height="1" fill="#ececec"/><rect x="2" y="4" width="5" height="1" fill="#000"/><rect x="4" y="2" width="1" height="5" fill="#000"/></svg></div>
<div class="a" style="left:69px;top:215px"><svg width="16" height="16" viewBox="0 0 16 16"><defs><linearGradient id="fg10" x1="0" y1="0" x2="0.35" y2="1"><stop offset="0" stop-color="#fffef2"/><stop offset="0.5" stop-color="#fff19a"/><stop offset="1" stop-color="#f2d010"/></linearGradient></defs><path d="M9.5 1.5 h3.5 q0.8 0 0.8 0.8 v8.8 l-4.3 1.4z" fill="#fff6c4" stroke="#c69200"/><path d="M1.5 6 q0-1.5 1.5-1.7 l8.5-0.8 q1 0 1 1 v7 l-7.5 3 q-2 0.5-2.8-0.6 q-0.7-0.9-0.7-2.4z" fill="url(#fg10)" stroke="#c69200"/><path d="M3.5 5.5 v8.5" stroke="#e2b410" stroke-width="0.8"/></svg></div>
<div class="t" style="left:86.00px;top:214px;letter-spacing:0.200px">Прибыль (убыток) от продаж</div>
<div class="a" style="left:40px;top:236px"><svg width="9" height="9"><rect x="0.5" y="0.5" width="8" height="8" fill="#fff" stroke="#8a8a8a"/><rect x="1" y="2" width="7" height="1" fill="#f4f4f4"/><rect x="1" y="6" width="7" height="1" fill="#ececec"/><rect x="2" y="4" width="5" height="1" fill="#000"/></svg></div>
<div class="a" style="left:53px;top:233px"><svg width="16" height="16" viewBox="0 0 16 16"><defs><linearGradient id="fg11" x1="0" y1="0" x2="0.35" y2="1"><stop offset="0" stop-color="#fffef2"/><stop offset="0.5" stop-color="#fff19a"/><stop offset="1" stop-color="#f2d010"/></linearGradient></defs><path d="M9.5 1.5 h3.5 q0.8 0 0.8 0.8 v8.8 l-4.3 1.4z" fill="#fff6c4" stroke="#c69200"/><path d="M1.5 6 q0-1.5 1.5-1.7 l8.5-0.8 q1 0 1 1 v7 l-7.5 3 q-2 0.5-2.8-0.6 q-0.7-0.9-0.7-2.4z" fill="url(#fg11)" stroke="#c69200"/><path d="M3.5 5.5 v8.5" stroke="#e2b410" stroke-width="0.8"/></svg></div>
<div class="t" style="left:70.00px;top:232px;letter-spacing:0.136px">Прочие доходы и расходы</div>
<div class="a" style="left:56px;top:254px"><svg width="9" height="9"><rect x="0.5" y="0.5" width="8" height="8" fill="#fff" stroke="#8a8a8a"/><rect x="1" y="2" width="7" height="1" fill="#f4f4f4"/><rect x="1" y="6" width="7" height="1" fill="#ececec"/><rect x="2" y="4" width="5" height="1" fill="#000"/></svg></div>
<div class="a" style="left:69px;top:251px"><svg width="16" height="16" viewBox="0 0 16 16"><defs><linearGradient id="fg12" x1="0" y1="0" x2="0.35" y2="1"><stop offset="0" stop-color="#fffef2"/><stop offset="0.5" stop-color="#fff19a"/><stop offset="1" stop-color="#f2d010"/></linearGradient></defs><path d="M9.5 1.5 h3.5 q0.8 0 0.8 0.8 v8.8 l-4.3 1.4z" fill="#fff6c4" stroke="#c69200"/><path d="M1.5 6 q0-1.5 1.5-1.7 l8.5-0.8 q1 0 1 1 v7 l-7.5 3 q-2 0.5-2.8-0.6 q-0.7-0.9-0.7-2.4z" fill="url(#fg12)" stroke="#c69200"/><path d="M3.5 5.5 v8.5" stroke="#e2b410" stroke-width="0.8"/></svg></div>
<div class="t" style="left:86.00px;top:250px;letter-spacing:0.140px">Прибыль (убыток) от продолжающейся деятельности <span class="el">...</span></div>
<div class="a" style="left:86px;top:270px"><svg width="13" height="15" viewBox="0 0 13 15"><defs><linearGradient id="dg13" x1="0" y1="0" x2="1" y2="1"><stop offset="0" stop-color="#ccd4f0"/><stop offset="1" stop-color="#9ca8d8"/></linearGradient></defs><path d="M0.5 0.5 h8 l3 3 v10 h-11z" fill="#fff" stroke="#6676a6"/><path d="M1 13 h10 v-9" fill="none" stroke="#e6f2fb" stroke-width="0.8"/><path d="M8.5 0.5 v3 h3" fill="none" stroke="#6676a6"/><rect x="2" y="5" width="8" height="1" fill="#a8b2dc"/><rect x="2" y="7" width="8" height="5" fill="url(#dg13)"/></svg></div>
<div class="t" style="left:103.00px;top:268px;letter-spacing:0.184px">Доходы от участия в других организациях</div>
<div class="a" style="left:86px;top:288px"><svg width="13" height="15" viewBox="0 0 13 15"><defs><linearGradient id="dg14" x1="0" y1="0" x2="1" y2="1"><stop offset="0" stop-color="#ccd4f0"/><stop offset="1" stop-color="#9ca8d8"/></linearGradient></defs><path d="M0.5 0.5 h8 l3 3 v10 h-11z" fill="#fff" stroke="#6676a6"/><path d="M1 13 h10 v-9" fill="none" stroke="#e6f2fb" stroke-width="0.8"/><path d="M8.5 0.5 v3 h3" fill="none" stroke="#6676a6"/><rect x="2" y="5" width="8" height="1" fill="#a8b2dc"/><rect x="2" y="7" width="8" height="5" fill="url(#dg14)"/></svg></div>
<div class="t" style="left:102.00px;top:286px;letter-spacing:0.158px">Проценты к получению</div>
<div class="a" style="left:86px;top:306px"><svg width="13" height="15" viewBox="0 0 13 15"><defs><linearGradient id="dg15" x1="0" y1="0" x2="1" y2="1"><stop offset="0" stop-color="#ccd4f0"/><stop offset="1" stop-color="#9ca8d8"/></linearGradient></defs><path d="M0.5 0.5 h8 l3 3 v10 h-11z" fill="#fff" stroke="#6676a6"/><path d="M1 13 h10 v-9" fill="none" stroke="#e6f2fb" stroke-width="0.8"/><path d="M8.5 0.5 v3 h3" fill="none" stroke="#6676a6"/><rect x="2" y="5" width="8" height="1" fill="#a8b2dc"/><rect x="2" y="7" width="8" height="5" fill="url(#dg15)"/></svg></div>
<div class="t" style="left:102.00px;top:304px;letter-spacing:0.188px">Проценты к уплате</div>
<div class="a" style="left:86px;top:324px"><svg width="13" height="15" viewBox="0 0 13 15"><defs><linearGradient id="dg16" x1="0" y1="0" x2="1" y2="1"><stop offset="0" stop-color="#ccd4f0"/><stop offset="1" stop-color="#9ca8d8"/></linearGradient></defs><path d="M0.5 0.5 h8 l3 3 v10 h-11z" fill="#fff" stroke="#6676a6"/><path d="M1 13 h10 v-9" fill="none" stroke="#e6f2fb" stroke-width="0.8"/><path d="M8.5 0.5 v3 h3" fill="none" stroke="#6676a6"/><rect x="2" y="5" width="8" height="1" fill="#a8b2dc"/><rect x="2" y="7" width="8" height="5" fill="url(#dg16)"/></svg></div>
<div class="t" style="left:102.00px;top:322px;letter-spacing:0.250px">Прочие доходы</div>
<div class="a" style="left:86px;top:342px"><svg width="13" height="15" viewBox="0 0 13 15"><defs><linearGradient id="dg17" x1="0" y1="0" x2="1" y2="1"><stop offset="0" stop-color="#ccd4f0"/><stop offset="1" stop-color="#9ca8d8"/></linearGradient></defs><path d="M0.5 0.5 h8 l3 3 v10 h-11z" fill="#fff" stroke="#6676a6"/><path d="M1 13 h10 v-9" fill="none" stroke="#e6f2fb" stroke-width="0.8"/><path d="M8.5 0.5 v3 h3" fill="none" stroke="#6676a6"/><rect x="2" y="5" width="8" height="1" fill="#a8b2dc"/><rect x="2" y="7" width="8" height="5" fill="url(#dg17)"/></svg></div>
<div class="t" style="left:102.00px;top:340px;letter-spacing:0.077px">Прочие расходы</div>
<div class="a" style="left:56px;top:362px"><svg width="9" height="9"><rect x="0.5" y="0.5" width="8" height="8" fill="#fff" stroke="#8a8a8a"/><rect x="1" y="2" width="7" height="1" fill="#f4f4f4"/><rect x="1" y="6" width="7" height="1" fill="#ececec"/><rect x="2" y="4" width="5" height="1" fill="#000"/><rect x="4" y="2" width="1" height="5" fill="#000"/></svg></div>
<div class="a" style="left:69px;top:359px"><svg width="16" height="16" viewBox="0 0 16 16"><defs><linearGradient id="fg18" x1="0" y1="0" x2="0.35" y2="1"><stop offset="0" stop-color="#fffef2"/><stop offset="0.5" stop-color="#fff19a"/><stop offset="1" stop-color="#f2d010"/></linearGradient></defs><path d="M9.5 1.5 h3.5 q0.8 0 0.8 0.8 v8.8 l-4.3 1.4z" fill="#fff6c4" stroke="#c69200"/><path d="M1.5 6 q0-1.5 1.5-1.7 l8.5-0.8 q1 0 1 1 v7 l-7.5 3 q-2 0.5-2.8-0.6 q-0.7-0.9-0.7-2.4z" fill="url(#fg18)" stroke="#c69200"/><path d="M3.5 5.5 v8.5" stroke="#e2b410" stroke-width="0.8"/></svg></div>
<div class="t" style="left:86.00px;top:358px;letter-spacing:0.136px">Чистая прибыль (убыток)</div>
<div class="a" style="left:40px;top:380px"><svg width="9" height="9"><rect x="0.5" y="0.5" width="8" height="8" fill="#fff" stroke="#8a8a8a"/><rect x="1" y="2" width="7" height="1" fill="#f4f4f4"/><rect x="1" y="6" width="7" height="1" fill="#ececec"/><rect x="2" y="4" width="5" height="1" fill="#000"/><rect x="4" y="2" width="1" height="5" fill="#000"/></svg></div>
<div class="a" style="left:53px;top:377px"><svg width="16" height="16" viewBox="0 0 16 16"><defs><linearGradient id="fg19" x1="0" y1="0" x2="0.35" y2="1"><stop offset="0" stop-color="#fffef2"/><stop offset="0.5" stop-color="#fff19a"/><stop offset="1" stop-color="#f2d010"/></linearGradient></defs><path d="M9.5 1.5 h3.5 q0.8 0 0.8 0.8 v8.8 l-4.3 1.4z" fill="#fff6c4" stroke="#c69200"/><path d="M1.5 6 q0-1.5 1.5-1.7 l8.5-0.8 q1 0 1 1 v7 l-7.5 3 q-2 0.5-2.8-0.6 q-0.7-0.9-0.7-2.4z" fill="url(#fg19)" stroke="#c69200"/><path d="M3.5 5.5 v8.5" stroke="#e2b410" stroke-width="0.8"/></svg></div>
<div class="t" style="left:70.00px;top:376px;letter-spacing:0.000px">Справочно</div>
<div class="a" style="left:24px;top:398px"><svg width="9" height="9"><rect x="0.5" y="0.5" width="8" height="8" fill="#fff" stroke="#8a8a8a"/><rect x="1" y="2" width="7" height="1" fill="#f4f4f4"/><rect x="1" y="6" width="7" height="1" fill="#ececec"/><rect x="2" y="4" width="5" height="1" fill="#000"/><rect x="4" y="2" width="1" height="5" fill="#000"/></svg></div>
<div class="a" style="left:37px;top:395px"><svg width="16" height="16" viewBox="0 0 16 16"><defs><linearGradient id="fg20" x1="0" y1="0" x2="0.35" y2="1"><stop offset="0" stop-color="#fffef2"/><stop offset="0.5" stop-color="#fff19a"/><stop offset="1" stop-color="#f2d010"/></linearGradient></defs><path d="M9.5 1.5 h3.5 q0.8 0 0.8 0.8 v8.8 l-4.3 1.4z" fill="#fff6c4" stroke="#c69200"/><path d="M1.5 6 q0-1.5 1.5-1.7 l8.5-0.8 q1 0 1 1 v7 l-7.5 3 q-2 0.5-2.8-0.6 q-0.7-0.9-0.7-2.4z" fill="url(#fg20)" stroke="#c69200"/><path d="M3.5 5.5 v8.5" stroke="#e2b410" stroke-width="0.8"/></svg></div>
<div class="t" style="left:54.00px;top:394px;letter-spacing:0.043px">Отчет о целевом использовании полученных средств</div>
<div class="a" style="left:24px;top:416px"><svg width="9" height="9"><rect x="0.5" y="0.5" width="8" height="8" fill="#fff" stroke="#8a8a8a"/><rect x="1" y="2" width="7" height="1" fill="#f4f4f4"/><rect x="1" y="6" width="7" height="1" fill="#ececec"/><rect x="2" y="4" width="5" height="1" fill="#000"/><rect x="4" y="2" width="1" height="5" fill="#000"/></svg></div>
<div class="a" style="left:37px;top:413px"><svg width="16" height="16" viewBox="0 0 16 16"><defs><linearGradient id="fg21" x1="0" y1="0" x2="0.35" y2="1"><stop offset="0" stop-color="#fffef2"/><stop offset="0.5" stop-color="#fff19a"/><stop offset="1" stop-color="#f2d010"/></linearGradient></defs><path d="M9.5 1.5 h3.5 q0.8 0 0.8 0.8 v8.8 l-4.3 1.4z" fill="#fff6c4" stroke="#c69200"/><path d="M1.5 6 q0-1.5 1.5-1.7 l8.5-0.8 q1 0 1 1 v7 l-7.5 3 q-2 0.5-2.8-0.6 q-0.7-0.9-0.7-2.4z" fill="url(#fg21)" stroke="#c69200"/><path d="M3.5 5.5 v8.5" stroke="#e2b410" stroke-width="0.8"/></svg></div>
<div class="t" style="left:54.00px;top:412px;letter-spacing:0.074px">Отчет об изменениях капитала</div>
<div class="a" style="left:24px;top:434px"><svg width="9" height="9"><rect x="0.5" y="0.5" width="8" height="8" fill="#fff" stroke="#8a8a8a"/><rect x="1" y="2" width="7" height="1" fill="#f4f4f4"/><rect x="1" y="6" width="7" height="1" fill="#ececec"/><rect x="2" y="4" width="5" height="1" fill="#000"/><rect x="4" y="2" width="1" height="5" fill="#000"/></svg></div>
<div class="a" style="left:37px;top:431px"><svg width="16" height="16" viewBox="0 0 16 16"><defs><linearGradient id="fg22" x1="0" y1="0" x2="0.35" y2="1"><stop offset="0" stop-color="#fffef2"/><stop offset="0.5" stop-color="#fff19a"/><stop offset="1" stop-color="#f2d010"/></linearGradient></defs><path d="M9.5 1.5 h3.5 q0.8 0 0.8 0.8 v8.8 l-4.3 1.4z" fill="#fff6c4" stroke="#c69200"/><path d="M1.5 6 q0-1.5 1.5-1.7 l8.5-0.8 q1 0 1 1 v7 l-7.5 3 q-2 0.5-2.8-0.6 q-0.7-0.9-0.7-2.4z" fill="url(#fg22)" stroke="#c69200"/><path d="M3.5 5.5 v8.5" stroke="#e2b410" stroke-width="0.8"/></svg></div>
<div class="t" style="left:54.00px;top:430px;letter-spacing:0.029px">Отчет об изменениях капитала с 2025</div>
<div class="a" style="left:24px;top:452px"><svg width="9" height="9"><rect x="0.5" y="0.5" width="8" height="8" fill="#fff" stroke="#8a8a8a"/><rect x="1" y="2" width="7" height="1" fill="#f4f4f4"/><rect x="1" y="6" width="7" height="1" fill="#ececec"/><rect x="2" y="4" width="5" height="1" fill="#000"/><rect x="4" y="2" width="1" height="5" fill="#000"/></svg></div>
<div class="a" style="left:37px;top:449px"><svg width="16" height="16" viewBox="0 0 16 16"><defs><linearGradient id="fg23" x1="0" y1="0" x2="0.35" y2="1"><stop offset="0" stop-color="#fffef2"/><stop offset="0.5" stop-color="#fff19a"/><stop offset="1" stop-color="#f2d010"/></linearGradient></defs><path d="M9.5 1.5 h3.5 q0.8 0 0.8 0.8 v8.8 l-4.3 1.4z" fill="#fff6c4" stroke="#c69200"/><path d="M1.5 6 q0-1.5 1.5-1.7 l8.5-0.8 q1 0 1 1 v7 l-7.5 3 q-2 0.5-2.8-0.6 q-0.7-0.9-0.7-2.4z" fill="url(#fg23)" stroke="#c69200"/><path d="M3.5 5.5 v8.5" stroke="#e2b410" stroke-width="0.8"/></svg></div>
<div class="t" style="left:54.00px;top:448px;letter-spacing:0.000px">Пояснения к балансу</div>
<div class="a" style="left:24px;top:470px"><svg width="9" height="9"><rect x="0.5" y="0.5" width="8" height="8" fill="#fff" stroke="#8a8a8a"/><rect x="1" y="2" width="7" height="1" fill="#f4f4f4"/><rect x="1" y="6" width="7" height="1" fill="#ececec"/><rect x="2" y="4" width="5" height="1" fill="#000"/><rect x="4" y="2" width="1" height="5" fill="#000"/></svg></div>
<div class="a" style="left:37px;top:467px"><svg width="16" height="16" viewBox="0 0 16 16"><defs><linearGradient id="fg24" x1="0" y1="0" x2="0.35" y2="1"><stop offset="0" stop-color="#fffef2"/><stop offset="0.5" stop-color="#fff19a"/><stop offset="1" stop-color="#f2d010"/></linearGradient></defs><path d="M9.5 1.5 h3.5 q0.8 0 0.8 0.8 v8.8 l-4.3 1.4z" fill="#fff6c4" stroke="#c69200"/><path d="M1.5 6 q0-1.5 1.5-1.7 l8.5-0.8 q1 0 1 1 v7 l-7.5 3 q-2 0.5-2.8-0.6 q-0.7-0.9-0.7-2.4z" fill="url(#fg24)" stroke="#c69200"/><path d="M3.5 5.5 v8.5" stroke="#e2b410" stroke-width="0.8"/></svg></div>
<div class="t" style="left:54.00px;top:466px;letter-spacing:-0.040px">Пояснения к балансу с 2025</div>
<div class="a" style="left:412px;top:34px;width:1px;height:20px;background:#e6e6e6"></div>
<div class="a" style="left:528px;top:34px;width:1px;height:20px;background:#e6e6e6"></div>
<div class="a" style="left:598px;top:34px;width:1px;height:20px;background:#e6e6e6"></div>
<div class="a" style="left:698px;top:34px;width:1px;height:20px;background:#e6e6e6"></div>
<div class="a" style="left:834px;top:34px;width:1px;height:20px;background:#e6e6e6"></div>
<div class="a" style="left:392px;top:35px"><svg width="16" height="16" viewBox="0 0 16 16"><path d="M11.5 1.5 h3.2 q0.6 0 0.6 0.6 v9 l-3.8 1.2z" fill="#fff4c0" stroke="#cf9a08"/><path d="M5.5 4.8 q0-0.8 0.8-0.9 l5.2-0.9 v9 l-5.5 1.8z" fill="#fffbe0" stroke="#cf9a08"/><path d="M2.5 6.5 q0-1 1-1 h2 l0.5 8.5 l-1.5 0.8 q-1.2-2.5-2-8.3z" fill="#fff0b0" stroke="#cf9a08"/><path d="M10.5 5.5 l4.5 4.6 h-2.5 v4.4 h-4 v-4.4 h-2.5z" fill="#72e66c" stroke="#1a9c1a"/><path d="M9.5 10.5 v3" stroke="#b8f8b0" stroke-width="1"/></svg></div>
<div class="t" style="left:493.00px;top:35px;letter-spacing:-0.250px">Номер</div>
<div class="t" style="left:531.00px;top:35px;letter-spacing:0.400px">Проект</div>
<div class="t" style="left:601.00px;top:35px;letter-spacing:0.438px">Код строки отч<span class="el">...</span></div>
<div class="t" style="left:701.00px;top:35px;letter-spacing:-0.091px">Наименование</div>
<div class="a" style="left:392px;top:55px;width:20px;height:16px;background:#f0f0f0"></div>
<div class="a" style="left:391px;top:71px;width:21px;height:1px;background:#a8a8a8"></div>
<div class="a" style="left:528px;top:54px;width:1px;height:18px;background:#e2e2e2"></div>
<div class="a" style="left:598px;top:54px;width:1px;height:18px;background:#e2e2e2"></div>
<div class="a" style="left:698px;top:54px;width:1px;height:18px;background:#e2e2e2"></div>
<div class="a" style="left:834px;top:54px;width:1px;height:18px;background:#e2e2e2"></div>
<div class="a" style="left:413px;top:71px;width:423px;height:1px;background:#e2e2e2"></div>
<div class="a" style="left:413px;top:54px;width:113px;height:16px;border:1px solid #d2d2d2;background:linear-gradient(#fbfbfb 0px,#e9e9e9 8px,#c6c6c6 8px,#cfcfcf 15px,#efefef 15px);box-shadow:inset 1px 0 #f6f6f6,inset -1px 0 #eeeeee"></div>
<div class="a" style="left:529px;top:54px;width:308px;height:16px;border:1px solid #d2d2d2;background:linear-gradient(#fbfbfb 0px,#e9e9e9 8px,#c6c6c6 8px,#cfcfcf 15px,#efefef 15px);box-shadow:inset 1px 0 #f6f6f6,inset -1px 0 #eeeeee"></div>
<div class="a" style="left:395px;top:56px"><svg width="13" height="15" viewBox="0 0 13 15"><defs><linearGradient id="dgl0" x1="0" y1="0" x2="1" y2="1"><stop offset="0" stop-color="#ccd4f0"/><stop offset="1" stop-color="#9ca8d8"/></linearGradient></defs><path d="M0.5 0.5 h8 l3 3 v10 h-11z" fill="#fff" stroke="#6676a6"/><path d="M1 13 h10 v-9" fill="none" stroke="#e6f2fb" stroke-width="0.8"/><path d="M8.5 0.5 v3 h3" fill="none" stroke="#6676a6"/><rect x="2" y="5" width="8" height="1" fill="#a8b2dc"/><rect x="2" y="7" width="8" height="5" fill="url(#dgl0)"/></svg></div>
<div class="t" style="left:519.00px;top:54px;letter-spacing:0.000px">6</div>
<div class="t" style="left:531.00px;top:54px;letter-spacing:-0.300px">АО Фирма<span class="el">...</span></div>
<div class="t" style="left:600.00px;top:54px;letter-spacing:0.333px">2310</div>
<div class="t" style="left:701.00px;top:54px;letter-spacing:0.227px">Доходы от участия в <span class="el">...</span></div>
<div class="a" style="left:392px;top:72px;width:20px;height:17px;background:#f0f0f0"></div>
<div class="a" style="left:391px;top:89px;width:21px;height:1px;background:#a8a8a8"></div>
<div class="a" style="left:528px;top:72px;width:1px;height:18px;background:#e2e2e2"></div>
<div class="a" style="left:598px;top:72px;width:1px;height:18px;background:#e2e2e2"></div>
<div class="a" style="left:698px;top:72px;width:1px;height:18px;background:#e2e2e2"></div>
<div class="a" style="left:834px;top:72px;width:1px;height:18px;background:#e2e2e2"></div>
<div class="a" style="left:413px;top:89px;width:423px;height:1px;background:#e2e2e2"></div>
<div class="a" style="left:395px;top:74px"><svg width="13" height="15" viewBox="0 0 13 15"><defs><linearGradient id="dgl1" x1="0" y1="0" x2="1" y2="1"><stop offset="0" stop-color="#ccd4f0"/><stop offset="1" stop-color="#9ca8d8"/></linearGradient></defs><path d="M0.5 0.5 h8 l3 3 v10 h-11z" fill="#fff" stroke="#6676a6"/><path d="M1 13 h10 v-9" fill="none" stroke="#e6f2fb" stroke-width="0.8"/><path d="M8.5 0.5 v3 h3" fill="none" stroke="#6676a6"/><rect x="2" y="5" width="8" height="1" fill="#a8b2dc"/><rect x="2" y="7" width="8" height="5" fill="url(#dgl1)"/></svg></div>
<div class="t" style="left:519.00px;top:72px;letter-spacing:0.000px">7</div>
<div class="t" style="left:531.00px;top:72px;letter-spacing:-0.300px">АО Фирма<span class="el">...</span></div>
<div class="t" style="left:600.00px;top:72px;letter-spacing:0.333px">2320</div>
<div class="t" style="left:700.00px;top:72px;letter-spacing:0.158px">Проценты к получению</div>
<div class="a" style="left:392px;top:90px;width:20px;height:17px;background:#f0f0f0"></div>
<div class="a" style="left:391px;top:107px;width:21px;height:1px;background:#a8a8a8"></div>
<div class="a" style="left:528px;top:90px;width:1px;height:18px;background:#e2e2e2"></div>
<div class="a" style="left:598px;top:90px;width:1px;height:18px;background:#e2e2e2"></div>
<div class="a" style="left:698px;top:90px;width:1px;height:18px;background:#e2e2e2"></div>
<div class="a" style="left:834px;top:90px;width:1px;height:18px;background:#e2e2e2"></div>
<div class="a" style="left:413px;top:107px;width:423px;height:1px;background:#e2e2e2"></div>
<div class="a" style="left:395px;top:92px"><svg width="13" height="15" viewBox="0 0 13 15"><defs><linearGradient id="dgl2" x1="0" y1="0" x2="1" y2="1"><stop offset="0" stop-color="#ccd4f0"/><stop offset="1" stop-color="#9ca8d8"/></linearGradient></defs><path d="M0.5 0.5 h8 l3 3 v10 h-11z" fill="#fff" stroke="#6676a6"/><path d="M1 13 h10 v-9" fill="none" stroke="#e6f2fb" stroke-width="0.8"/><path d="M8.5 0.5 v3 h3" fill="none" stroke="#6676a6"/><rect x="2" y="5" width="8" height="1" fill="#a8b2dc"/><rect x="2" y="7" width="8" height="5" fill="url(#dgl2)"/></svg></div>
<div class="t" style="left:519.00px;top:90px;letter-spacing:0.000px">8</div>
<div class="t" style="left:531.00px;top:90px;letter-spacing:-0.300px">АО Фирма<span class="el">...</span></div>
<div class="t" style="left:600.00px;top:90px;letter-spacing:0.333px">2330</div>
<div class="t" style="left:700.00px;top:90px;letter-spacing:0.188px">Проценты к уплате</div>
<div class="a" style="left:392px;top:108px;width:20px;height:17px;background:#f0f0f0"></div>
<div class="a" style="left:391px;top:125px;width:21px;height:1px;background:#a8a8a8"></div>
<div class="a" style="left:528px;top:108px;width:1px;height:18px;background:#e2e2e2"></div>
<div class="a" style="left:598px;top:108px;width:1px;height:18px;background:#e2e2e2"></div>
<div class="a" style="left:698px;top:108px;width:1px;height:18px;background:#e2e2e2"></div>
<div class="a" style="left:834px;top:108px;width:1px;height:18px;background:#e2e2e2"></div>
<div class="a" style="left:413px;top:125px;width:423px;height:1px;background:#e2e2e2"></div>
<div class="a" style="left:395px;top:110px"><svg width="13" height="15" viewBox="0 0 13 15"><defs><linearGradient id="dgl3" x1="0" y1="0" x2="1" y2="1"><stop offset="0" stop-color="#ccd4f0"/><stop offset="1" stop-color="#9ca8d8"/></linearGradient></defs><path d="M0.5 0.5 h8 l3 3 v10 h-11z" fill="#fff" stroke="#6676a6"/><path d="M1 13 h10 v-9" fill="none" stroke="#e6f2fb" stroke-width="0.8"/><path d="M8.5 0.5 v3 h3" fill="none" stroke="#6676a6"/><rect x="2" y="5" width="8" height="1" fill="#a8b2dc"/><rect x="2" y="7" width="8" height="5" fill="url(#dgl3)"/></svg></div>
<div class="t" style="left:519.00px;top:108px;letter-spacing:0.000px">9</div>
<div class="t" style="left:531.00px;top:108px;letter-spacing:-0.300px">АО Фирма<span class="el">...</span></div>
<div class="t" style="left:600.00px;top:108px;letter-spacing:0.333px">2340</div>
<div class="t" style="left:700.00px;top:108px;letter-spacing:0.250px">Прочие доходы</div>
<div class="a" style="left:392px;top:126px;width:20px;height:17px;background:#f0f0f0"></div>
<div class="a" style="left:391px;top:143px;width:21px;height:1px;background:#a8a8a8"></div>
<div class="a" style="left:528px;top:126px;width:1px;height:18px;background:#e2e2e2"></div>
<div class="a" style="left:598px;top:126px;width:1px;height:18px;background:#e2e2e2"></div>
<div class="a" style="left:698px;top:126px;width:1px;height:18px;background:#e2e2e2"></div>
<div class="a" style="left:834px;top:126px;width:1px;height:18px;background:#e2e2e2"></div>
<div class="a" style="left:413px;top:143px;width:423px;height:1px;background:#e2e2e2"></div>
<div class="a" style="left:395px;top:128px"><svg width="13" height="15" viewBox="0 0 13 15"><defs><linearGradient id="dgl4" x1="0" y1="0" x2="1" y2="1"><stop offset="0" stop-color="#ccd4f0"/><stop offset="1" stop-color="#9ca8d8"/></linearGradient></defs><path d="M0.5 0.5 h8 l3 3 v10 h-11z" fill="#fff" stroke="#6676a6"/><path d="M1 13 h10 v-9" fill="none" stroke="#e6f2fb" stroke-width="0.8"/><path d="M8.5 0.5 v3 h3" fill="none" stroke="#6676a6"/><rect x="2" y="5" width="8" height="1" fill="#a8b2dc"/><rect x="2" y="7" width="8" height="5" fill="url(#dgl4)"/></svg></div>
<div class="t" style="left:514.00px;top:126px;letter-spacing:0.000px">10</div>
<div class="t" style="left:531.00px;top:126px;letter-spacing:-0.300px">АО Фирма<span class="el">...</span></div>
<div class="t" style="left:600.00px;top:126px;letter-spacing:0.333px">2350</div>
<div class="t" style="left:700.00px;top:126px;letter-spacing:0.077px">Прочие расходы</div>
<div class="a" style="left:412px;top:54px;width:1px;height:90px;background:#a0a0a0"></div>
</body></html>
